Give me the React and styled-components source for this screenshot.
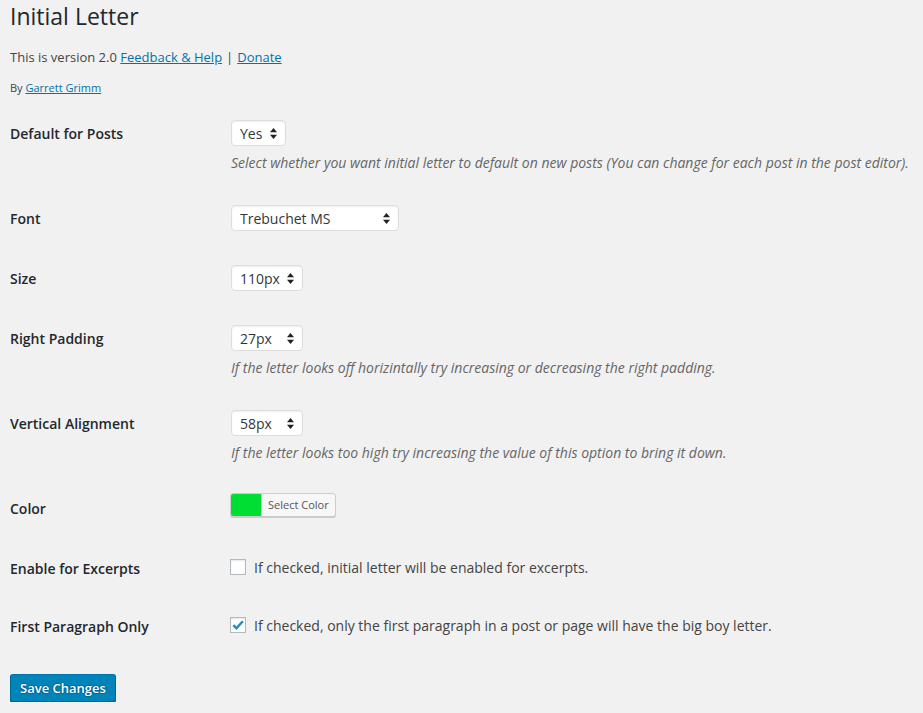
import styled, { createGlobalStyle } from "styled-components";

const GlobalStyle = createGlobalStyle`
  html, body {
    margin: 0;
    background: #f1f1f1;
  }
  body {
    font-family: "Open Sans", "Liberation Sans", sans-serif;
    font-size: 13px;
    color: #444;
  }
`;

const Wrap = styled.div`
  padding: 2px 10px 0 10px;
`;

const Title = styled.h1`
  margin: 0;
  font-size: 23px;
  font-weight: 400;
  line-height: 29px;
  color: #23282d;
`;

const Intro = styled.p`
  margin: 14px 0 0;
  line-height: 24px;
  font-size: 13px;
`;

const Byline = styled.p`
  margin: 12px 0 0;
  font-size: 11px;
  line-height: 14px;
`;

const A = styled.a`
  color: #0073aa;
  text-decoration: underline;
`;

const Sep = styled.span`
  margin: 0 4px;
`;

const Table = styled.div`
  margin-top: 8px;
`;

const Row = styled.div`
  display: grid;
  grid-template-columns: 221px 1fr;
`;

const Label = styled.div`
  padding: 22px 0 18px;
  font-size: 14px;
  font-weight: 600;
  line-height: 18px;
  color: #23282d;
`;

const Cell = styled.div`
  padding: 15px 0;
`;

const Control = styled.div`
  height: ${(p) => p.$h || 30}px;
  display: flex;
  align-items: ${(p) => (p.$top ? "flex-start" : "center")};
  box-sizing: border-box;
`;

const Desc = styled.p`
  margin: 4px 0 0;
  font-size: 14px;
  line-height: 21px;
  font-style: italic;
  color: #666;
`;

const SelectWrap = styled.div`
  position: relative;
  width: ${(p) => p.$w}px;
  height: 26px;
`;

const Select = styled.select`
  appearance: none;
  -webkit-appearance: none;
  width: 100%;
  height: 26px;
  margin: 0;
  padding: 0 8px;
  font-family: inherit;
  font-size: 14px;
  color: #32373c;
  background: #fff;
  border: 1px solid #ddd;
  border-radius: 4px;
  box-shadow: inset 0 1px 2px rgba(0, 0, 0, 0.07);
  outline: none;
`;

const Arrows = styled.svg`
  position: absolute;
  right: 9px;
  top: 8px;
  pointer-events: none;
`;

const ColorButton = styled.button`
  display: flex;
  align-items: stretch;
  height: 24px;
  padding: 0;
  margin: 0 0 0 -1px;
  border: 1px solid #ccc;
  border-radius: 3px;
  background: #f7f7f7;
  box-shadow: 0 1px 0 #ccc;
  overflow: hidden;
  font-family: inherit;
  cursor: pointer;
`;

const Swatch = styled.span`
  width: 30px;
  background: ${(p) => p.$c};
  border-right: 1px solid #ccc;
`;

const SwatchText = styled.span`
  padding: 0 6px;
  font-size: 11px;
  line-height: 22px;
  color: #555;
`;

const CheckLabel = styled.label`
  display: flex;
  align-items: center;
  gap: 8px;
  margin-left: -1px;
  font-size: 14px;
  color: #444;
`;

const Box = styled.span`
  width: 14px;
  height: 14px;
  border: 1px solid #b4b9be;
  background: #fff;
  box-shadow: inset 0 1px 2px rgba(0, 0, 0, 0.1);
  display: flex;
  align-items: center;
  justify-content: center;
  flex: none;
`;

const Submit = styled.div`
  padding-top: 20px;
`;

const SaveButton = styled.button`
  height: 28px;
  padding: 0 9px 1px;
  font-family: inherit;
  font-size: 13px;
  font-weight: 600;
  color: #fff;
  background: #0085ba;
  border: 1px solid;
  border-color: #0073aa #006799 #006799;
  border-radius: 3px;
  box-shadow: 0 1px 0 #006799;
  text-shadow: 0 -1px 1px #006799, 1px 0 1px #006799, 0 1px 1px #006799, -1px 0 1px #006799;
  cursor: pointer;
`;

function SelectBox({ value, width }) {
  return (
    <SelectWrap $w={width}>
      <Select defaultValue={value}>
        <option>{value}</option>
      </Select>
      <Arrows width="7" height="11" viewBox="0 0 7 11">
        <path d="M3.5 0 L7 4.2 L0 4.2 Z" fill="#222" />
        <path d="M3.5 11 L7 6.8 L0 6.8 Z" fill="#222" />
      </Arrows>
    </SelectWrap>
  );
}

function Checkbox({ checked, children }) {
  return (
    <CheckLabel>
      <Box>
        {checked && (
          <svg width="14" height="14" viewBox="0 0 14 14">
            <path d="M2.3 7.2 L5.4 10.2 L11.8 3.2" stroke="#1e8cbe" strokeWidth="2.4" fill="none" />
          </svg>
        )}
      </Box>
      {children}
    </CheckLabel>
  );
}

const rows = [
  {
    label: "Default for Posts",
    control: <SelectBox value="Yes" width={55} />,
    desc: "Select whether you want initial letter to default on new posts (You can change for each post in the post editor).",
  },
  { label: "Font", control: <SelectBox value="Trebuchet MS" width={168} /> },
  { label: "Size", control: <SelectBox value="110px" width={72} /> },
  {
    label: "Right Padding",
    control: <SelectBox value="27px" width={72} />,
    desc: "If the letter looks off horizintally try increasing or decreasing the right padding.",
  },
  {
    label: "Vertical Alignment",
    control: <SelectBox value="58px" width={72} />,
    desc: "If the letter looks too high try increasing the value of this option to bring it down.",
  },
  {
    label: "Color",
    top: true,
    control: (
      <ColorButton type="button">
        <Swatch $c="#00dd33" />
        <SwatchText>Select Color</SwatchText>
      </ColorButton>
    ),
  },
  {
    label: "Enable for Excerpts",
    h: 28,
    control: <Checkbox>If checked, initial letter will be enabled for excerpts.</Checkbox>,
  },
  {
    label: "First Paragraph Only",
    h: 28,
    control: (
      <Checkbox checked>
        If checked, only the first paragraph in a post or page will have the big boy letter.
      </Checkbox>
    ),
  },
];

export default function App() {
  return (
    <Wrap>
      <GlobalStyle />
      <Title>Initial Letter</Title>
      <Intro>
        This is version 2.0 <A href="#">Feedback &amp; Help</A>
        <Sep>|</Sep>
        <A href="#">Donate</A>
      </Intro>
      <Byline>
        By <A href="#">Garrett Grimm</A>
      </Byline>
      <Table>
        {rows.map((r) => (
          <Row key={r.label}>
            <Label>{r.label}</Label>
            <Cell>
              <Control $h={r.h} $top={r.top}>{r.control}</Control>
              {r.desc && <Desc>{r.desc}</Desc>}
            </Cell>
          </Row>
        ))}
      </Table>
      <Submit>
        <SaveButton type="button">Save Changes</SaveButton>
      </Submit>
    </Wrap>
  );
}
